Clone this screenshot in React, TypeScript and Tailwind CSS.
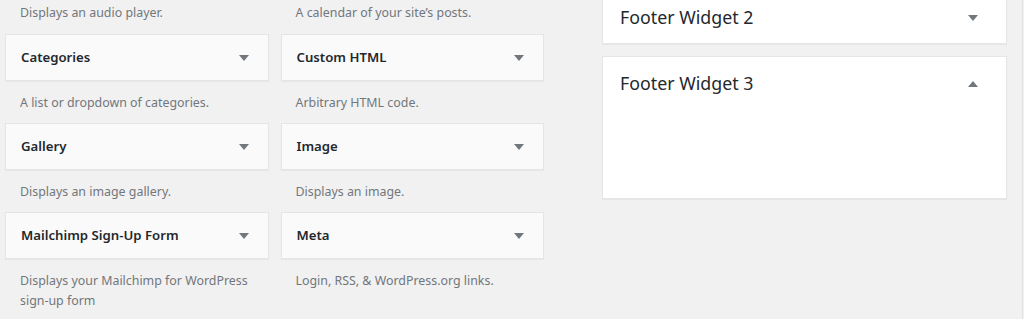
const widgets = [
	{ name: "Categories", desc: "A list or dropdown of categories." },
	{ name: "Custom HTML", desc: "Arbitrary HTML code." },
	{ name: "Gallery", desc: "Displays an image gallery." },
	{ name: "Image", desc: "Displays an image." },
	{ name: "Mailchimp Sign-Up Form", desc: "Displays your Mailchimp for WordPress sign-up form" },
	{ name: "Meta", desc: "Login, RSS, & WordPress.org links." },
];

function Arrow({ up = false }: { up?: boolean }) {
	return (
		<svg width="10" height="6" viewBox="0 0 10 6" className="fill-[#72777c]">
			{up ? <polygon points="0,6 10,6 5,0" /> : <polygon points="0,0 10,0 5,6" />}
		</svg>
	);
}

function WidgetCard({ name, desc }: { name: string; desc: string }) {
	return (
		<div>
			<div className="flex h-[47px] items-center justify-between border border-[#e5e5e5] bg-[#fafafa] pl-[15px] pr-[19px] shadow-[0_1px_1px_rgba(0,0,0,0.04)]">
				<h3 className="text-[13.2px] font-semibold text-[#23282d]">{name}</h3>
				<Arrow />
			</div>
			<p className="pt-3 pb-[10px] pl-[15px] pr-4 text-[12.4px] leading-5 text-[#72777c]">{desc}</p>
		</div>
	);
}

export default function App() {
	return (
		<div className="flex h-[319px] w-[1024px] overflow-hidden bg-[#f1f1f1] font-['Noto_Sans','Liberation_Sans',sans-serif]">
			{/* Available widgets */}
			<div className="grid w-[544px] shrink-0 grid-cols-2 content-start gap-x-3 pl-[5px]">
				<p className="pt-[3px] pb-[11px] pl-[15px] text-[12.4px] leading-5 text-[#72777c]">Displays an audio player.</p>
				<p className="pt-[3px] pb-[11px] pl-[15px] text-[12.4px] leading-5 text-[#72777c]">
					A calendar of your site’s posts.
				</p>
				{widgets.map((w) => (
					<WidgetCard key={w.name} name={w.name} desc={w.desc} />
				))}
			</div>

			{/* Sidebars */}
			<div className="ml-[58px] flex w-[405px] shrink-0 flex-col gap-3">
				<div className="-mt-[9px] flex h-[53px] items-center justify-between border border-[#e5e5e5] bg-white pl-[17px] pr-[28px] shadow-[0_1px_1px_rgba(0,0,0,0.04)]">
					<h2 className="text-[17.8px] text-[#23282d]">Footer Widget 2</h2>
					<Arrow />
				</div>
				<div className="h-[143px] border border-[#e5e5e5] bg-white shadow-[0_1px_1px_rgba(0,0,0,0.04)]">
					<div className="flex h-[53px] items-center justify-between pl-[17px] pr-[28px]">
						<h2 className="text-[17.8px] text-[#23282d]">Footer Widget 3</h2>
						<Arrow up />
					</div>
				</div>
			</div>

			<div className="ml-[15px] flex-1 border-l border-[#e2e2e2]" />
		</div>
	);
}
